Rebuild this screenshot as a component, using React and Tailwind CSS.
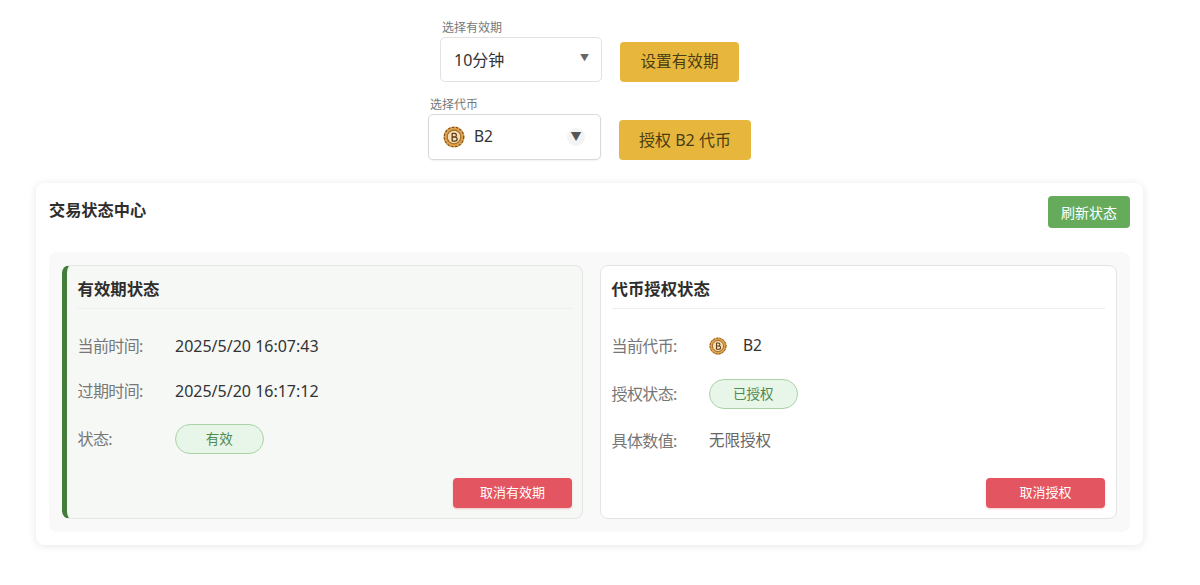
import React from "react";

const font = { fontFamily: '"Noto Sans", "Noto Sans CJK SC", sans-serif' };

function CoinIcon({ size = 22 }) {
  return (
    <svg width={size} height={size} viewBox="0 0 24 24" className="shrink-0">
      <circle cx="12" cy="12" r="11.5" fill="#e0a24a" />
      <circle cx="12" cy="12" r="10.6" fill="none" stroke="#7a4f22" strokeWidth="1.3" strokeDasharray="2.5 1.8" />
      <circle cx="12" cy="12" r="7.4" fill="#f5dfb2" stroke="#a06a2a" strokeWidth="1.3" />
      <path d="M10 7.5v9M10 8h2.6a2 2 0 0 1 0 4H10h3.2a2.2 2.2 0 0 1 0 4.4H10" fill="none" stroke="#5e3a16" strokeWidth="1.4" />
    </svg>
  );
}

function Row({ label, className, children }) {
  return (
    <div className={`flex items-center ${className}`}>
      <span className="w-[97.5px] shrink-0 text-[16px] leading-[22px] tracking-[-0.6px] text-[#777]">{label}</span>
      {children}
    </div>
  );
}

function Badge({ children }) {
  return (
    <span className="flex h-[30px] w-[88.5px] items-center justify-center rounded-[15px] border border-[#a9d3a5] bg-[#e8f5e9] text-[13.5px] text-[#4f8a4f]">
      {children}
    </span>
  );
}

function Panel({ title, accent, action, children }) {
  return (
    <div
      className={`flex h-[254px] flex-col rounded-[8px] border pb-[10px] pl-[10.5px] ${
        accent
          ? "w-[521px] border-[#e4e6e4] border-l-[5px] border-l-[#447c3c] bg-[#f6f8f6] pr-[10px]"
          : "w-[517px] border-[#e4e4e4] bg-white pr-[11px]"
      }`}
    >
      <h4 className="border-b border-[#eeeeee] pt-[10px] pb-[7px] text-[16.4px] leading-[25px] font-bold text-[#2e2e2e]">
        {title}
      </h4>
      <div className="flex-1 pt-[26px]">{children}</div>
      <div className="flex justify-end">
        <button className="h-[30px] w-[119px] rounded-[4px] bg-[#e35561] text-[13px] text-white shadow-[0_1px_2px_rgba(227,85,97,0.3)]">{action}</button>
      </div>
    </div>
  );
}

export default function App() {
  return (
    <div style={font} className="h-[585px] w-[1179px] overflow-hidden bg-white text-[#333]">
      <div className="flex justify-center gap-[18px] pt-[19px]">
        <div className="flex flex-col">
          <label className="pt-[1px] pl-[2px] text-[12px] leading-[16px] text-[#777]">选择有效期</label>
          <div className="mt-[1px] flex h-[45px] w-[162px] items-center justify-between rounded-[5px] border border-[#e3e3e3] bg-white pr-[12px] pl-[13px]">
            <span className="text-[16px] text-[#333]">10分钟</span>
            <span className="mb-[3px] text-[9px] text-[#666]">▼</span>
          </div>
        </div>
        <button className="mt-[23px] h-[40px] w-[119px] rounded-[4px] bg-[#e6b73c] text-[15.6px] text-[#4a3c14]">设置有效期</button>
      </div>

      <div className="mt-[15px] flex justify-center gap-[18px]">
        <div className="flex flex-col">
          <label className="pl-[2px] text-[12px] leading-[16px] text-[#777]">选择代币</label>
          <div className="mt-[1px] flex h-[46px] w-[173px] items-center rounded-[5px] border border-[#d9d9d9] bg-white pr-[15px] pl-[14px] shadow-[0_1px_2px_rgba(0,0,0,0.05)]">
            <CoinIcon />
            <span className="ml-[9px] flex-1 text-[15.5px] text-[#333]">B2</span>
            <span className="flex h-[18px] w-[18px] items-center justify-center rounded-full bg-[#f3f3f3] text-[11px] text-[#555]">▼</span>
          </div>
        </div>
        <button className="mt-[23px] h-[40px] w-[132px] rounded-[4px] bg-[#e6b73c] text-[16px] text-[#4a3c14]">授权 B2 代币</button>
      </div>

      <div className="mx-[36px] mt-[23px] h-[362px] rounded-[8px] bg-white px-[13px] pt-[13px] shadow-[0_1px_8px_rgba(0,0,0,0.1)]">
        <div className="flex items-start justify-between">
          <h3 className="pt-[1px] text-[16.2px] leading-[26px] font-bold text-[#2e2e2e]">交易状态中心</h3>
          <button className="h-[32px] w-[82px] rounded-[4px] bg-[#65ab5b] text-[14px] text-white">刷新状态</button>
        </div>
        <div className="mt-[24px] flex h-[280px] gap-[17px] rounded-[8px] bg-[#f9f9f9] p-[13px]">
          <Panel accent title="有效期状态" action="取消有效期">
            <Row label="当前时间:" className="h-[22px]">
              <span className="text-[16px] text-[#333]">2025/5/20 16:07:43</span>
            </Row>
            <Row label="过期时间:" className="mt-[23px] h-[22px]">
              <span className="text-[16px] text-[#333]">2025/5/20 16:17:12</span>
            </Row>
            <Row label="状态:" className="mt-[22px] h-[30px]">
              <Badge>有效</Badge>
            </Row>
          </Panel>
          <Panel title="代币授权状态" action="取消授权">
            <Row label="当前代币:" className="h-[22px]">
              <CoinIcon size={18} />
              <span className="ml-[16px] text-[15.5px] text-[#333]">B2</span>
            </Row>
            <Row label="授权状态:" className="mt-[22px] h-[30px]">
              <Badge>已授权</Badge>
            </Row>
            <Row label="具体数值:" className="mt-[21px] h-[22px]">
              <span className="text-[15.5px] text-[#666]">无限授权</span>
            </Row>
          </Panel>
        </div>
      </div>
    </div>
  );
}
